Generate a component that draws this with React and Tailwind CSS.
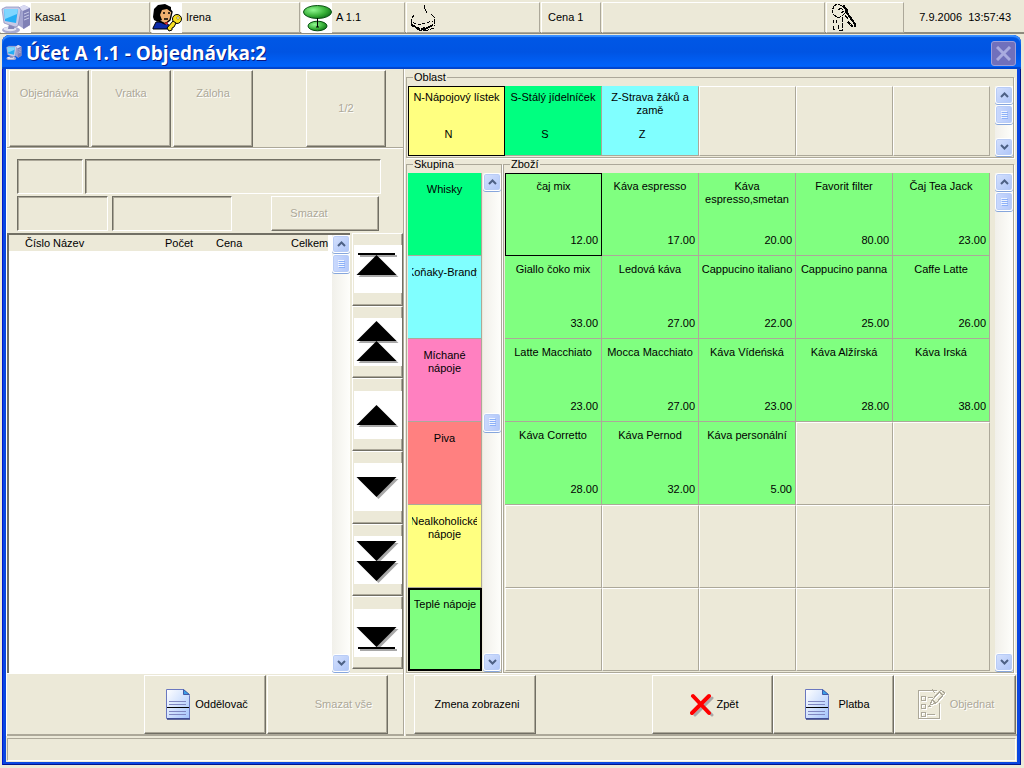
import React, { useState } from 'react'
import clsx from 'clsx'

const AREAS = [
  { name: 'N-Nápojový lístek', code: 'N', color: 'bg-[#ffff80]' },
  { name: 'S-Stálý jídelníček', code: 'S', color: 'bg-[#00ff80]' },
  { name: 'Z-Strava žáků a zamě', code: 'Z', color: 'bg-[#80ffff]' },
  null,
  null,
  null,
]

const GROUPS = [
  { lines: ['Whisky'], color: 'bg-[#00ff80]' },
  { lines: ['Koňaky-Brandy'], color: 'bg-[#80ffff]' },
  { lines: ['Míchané', 'nápoje'], color: 'bg-[#ff80c0]' },
  { lines: ['Piva'], color: 'bg-[#ff8080]' },
  { lines: ['Nealkoholické', 'nápoje'], color: 'bg-[#ffff80]' },
  { lines: ['Teplé nápoje'], color: 'bg-[#80ff80]' },
]

const GOODS = [
  ['čaj mix', '12.00'],
  ['Káva espresso', '17.00'],
  ['Káva espresso,smetan', '20.00'],
  ['Favorit filter', '80.00'],
  ['Čaj Tea Jack', '23.00'],
  ['Giallo čoko mix', '33.00'],
  ['Ledová káva', '27.00'],
  ['Cappucino italiano', '22.00'],
  ['Cappucino panna', '25.00'],
  ['Caffe Latte', '26.00'],
  ['Latte Macchiato', '23.00'],
  ['Mocca Macchiato', '27.00'],
  ['Káva Vídeńská', '23.00'],
  ['Káva Alžírská', '28.00'],
  ['Káva Irská', '38.00'],
  ['Káva Corretto', '28.00'],
  ['Káva Pernod', '32.00'],
  ['Káva personální', '5.00'],
]

const GOODS_SLOTS = 30

// shapes inside a 48x48 button face
const ARROWS = [
  { label: 'Na začátek', d: 'M4 8H41V10H4ZM22.5 10L42.5 30H2.5Z' },
  { label: 'O stránku nahoru', d: 'M22.5 3L42.5 23H2.5ZM22.5 23L42.5 43H2.5Z' },
  { label: 'Nahoru', d: 'M22.5 14L42.5 34H2.5Z' },
  { label: 'Dolů', d: 'M2.5 14H42.5L22.5 34Z' },
  { label: 'O stránku dolů', d: 'M2.5 5H42.5L22.5 25ZM2.5 25H42.5L22.5 45Z' },
  { label: 'Na konec', d: 'M2.5 18H42.5L22.5 38ZM4 38H41V40H4Z' },
]

const RAISED =
  'border border-t-white border-l-white border-r-[#716f64] border-b-[#716f64] shadow-[inset_-1px_-1px_0_#aca899]'
const SUNKEN =
  'border border-t-[#716f64] border-l-[#716f64] border-r-white border-b-white shadow-[inset_1px_1px_0_#aca899]'
const DISABLED = 'text-[#aca899] [text-shadow:1px_1px_0_#fff]'

/* ---------- icons ---------- */

function ComputerIcon({ className }) {
  return (
    <svg viewBox="0 0 30 30" className={className}>
      <path d="M17 5L23 2L29 5V22L23 26L17 22Z" fill="#a3a5d0" />
      <path d="M17 5L23 2L29 5L22 8Z" fill="#d9daf2" />
      <path d="M22 8L29 5V22L22 26Z" fill="#7f81b6" />
      <path d="M23 11L28 9M23 14L28 12M23 17L28 15" stroke="#c9cbe8" />
      <ellipse cx="10" cy="27" rx="9" ry="3.5" fill="#a9abd0" />
      <ellipse cx="9" cy="26" rx="6.5" ry="2.2" fill="#e4e5f4" />
      <path d="M8 21H15L13 26H7Z" fill="#8587b8" />
      <path d="M1 6L5 4L18 4L20 7L17 23L14 24L3 20Z" fill="#c8cae6" stroke="#8587b8" strokeWidth=".7" />
      <path d="M3 6L17 6L15 20L4 18Z" fill="#25aef5" />
      <path d="M3 6L17 6L16 11L4 16Z" fill="#7fd6ff" />
    </svg>
  )
}

function UserKeyIcon() {
  return (
    <svg viewBox="0 0 30 30" className="h-[30px] w-[30px] bg-white">
      <path d="M1 25L4 19H13L18 23L16 26H1Z" fill="#0c2ba8" stroke="#000" />
      <path d="M7 5L17 4L19 10L17 18L12 20L7 16Z" fill="#f0b070" />
      <path d="M1 14L2 6L6 2L13 1L19 4V9L15 6L10 7L8 12L10 17L6 19L2 17Z" fill="#000" />
      <path d="M11 10H13M16 10H18M12 16H16M17 5L20 9L18 17L13 21L7 18" fill="none" stroke="#000" strokeWidth="1.4" />
      <path d="M12 20L16 19L15 22Z" fill="#e02020" />
      <circle cx="25" cy="16" r="4.5" fill="#f8e020" stroke="#000" />
      <path d="M21 18L15 25L17 28L20 27V25L22 24L24 20Z" fill="#f8e020" stroke="#000" />
      <circle cx="26" cy="15" r="1.3" fill="#fff" stroke="#7a6500" strokeWidth=".6" />
    </svg>
  )
}

function TableIcon() {
  return (
    <svg viewBox="0 0 30 30" className="h-[30px] w-[30px] bg-white">
      <defs>
        <radialGradient id="leaf" cx=".35" cy=".35" r=".75">
          <stop offset="0" stopColor="#90f890" />
          <stop offset=".6" stopColor="#38b038" />
          <stop offset="1" stopColor="#0c6a18" />
        </radialGradient>
      </defs>
      <ellipse cx="15.5" cy="9" rx="14" ry="6.5" fill="url(#leaf)" stroke="#075010" />
      <ellipse cx="15.5" cy="23" rx="9.5" ry="4.8" fill="url(#leaf)" stroke="#075010" />
      <path d="M15.5 15V24" stroke="#000" />
      <path d="M14 24H17" stroke="#000" />
    </svg>
  )
}

function PrinterIcon() {
  return (
    <svg viewBox="0 0 30 30" className="h-[30px] w-[30px]" fill="none" stroke="#000" shapeRendering="crispEdges">
      <path d="M15 2V5L17 8L18 10" strokeDasharray="4 1" />
      <path d="M5 12L3 15L2 19L10 22L16 20L24 18" strokeDasharray="3 2" />
      <path d="M22 11L25 14V23" strokeDasharray="5 1" />
      <path d="M2 19V22L10 27L16 28L25 25" strokeDasharray="7 1" />
      <path d="M3 22L11 26L17 25" strokeWidth="2" strokeDasharray="4 1" />
      <path d="M14 27L20 24L24 22" strokeWidth="2" />
    </svg>
  )
}

function KeysIcon() {
  return (
    <svg viewBox="0 0 30 30" className="h-[30px] w-[30px]" fill="none" stroke="#000" shapeRendering="crispEdges">
      <path d="M3 3L6 1L9 2L13 2L15 6L14 10L11 13L7 15L3 12L1 8Z" strokeDasharray="4 1" />
      <path d="M7 7L10 5L13 8L10 10" strokeDasharray="3 1" />
      <path d="M12 3L16 7V10L24 21V24" strokeWidth="2" />
      <path d="M14 12L17 16" />
      <path d="M17 19L23 25" strokeWidth="2" strokeDasharray="3 1" />
      <path d="M11 14V27H8M2 17V20M5 17V20M2 23V26H5M7 22V26" strokeDasharray="5 1" />
    </svg>
  )
}

function DocumentIcon() {
  return (
    <svg viewBox="0 0 25 31" className="h-[31px] w-[25px] shrink-0">
      <defs>
        <linearGradient id="paper" x1="0" y1="0" x2="1" y2="1">
          <stop offset="0" stopColor="#fff" />
          <stop offset="1" stopColor="#a4c4fc" />
        </linearGradient>
      </defs>
      <path d="M.5 .5H17.5L23.5 6.5V29.5H.5Z" fill="url(#paper)" stroke="#6a78c0" />
      <path d="M1 30H24" stroke="#333f86" strokeWidth="1.5" />
      <path d="M17.5 .5V5.5H23.5Z" fill="#3aa0e8" stroke="#405aa8" />
      <path d="M3 12.5H20M3 15.5H20M3 22.5H20M3 25.5H20" stroke="#8087c0" />
      <path d="M1 18.5H23" stroke="#000" />
    </svg>
  )
}

function CrossIcon() {
  return (
    <svg viewBox="0 0 24 24" className="h-6 w-6 shrink-0" fill="none" strokeLinecap="round">
      <path d="M5 5L22 22M22 5L5 22" stroke="#a9a9a9" strokeWidth="3" />
      <path d="M3 3L19 20M19 3L2 20" stroke="#f00" strokeWidth="4" />
    </svg>
  )
}

function OrderIcon() {
  const d =
    'M19 1.5H.5V29.5H21.5V14M3 7.5H7V11.5H3ZM3 15.5H7V19.5H3ZM3 23.5H7V27.5H3ZM10 8.5H15M10 17.5H13M9 25.5H17M14 .5L17 4M12 16L14 11L23 1L27 4L18 14ZM14 11L18 14M21 3L25 6'
  return (
    <svg viewBox="0 0 28 31" className="h-[31px] w-7 shrink-0" fill="none" shapeRendering="crispEdges">
      <path d={d} stroke="#fff" transform="translate(1 1)" />
      <path d={d} stroke="#aca899" />
    </svg>
  )
}

/* ---------- small controls ---------- */

function ScrollButton({ label, d }) {
  return (
    <button
      aria-label={label}
      className="flex h-[18px] shrink-0 items-center justify-center rounded-[3px] border border-white bg-linear-to-br from-[#d5e1fd] to-[#aec5f8] shadow-[inset_0_0_0_1px_#b8ccf6,0_1px_0_#86a6dc]"
    >
      <svg viewBox="0 0 9 6" className="h-[6px] w-[9px]" fill="none" stroke="#4d6185" strokeWidth="2">
        <path d={d} />
      </svg>
    </button>
  )
}

function ScrollBar({ middle }) {
  return (
    <div className="flex w-[18px] shrink-0 flex-col bg-linear-to-r from-[#f1f0ea] to-[#fefefb]">
      <ScrollButton label="Nahoru" d="M1 5L4.5 1.5L8 5" />
      <div className={middle ? 'flex-1' : 'h-px'} />
      <div className="flex h-[19px] shrink-0 items-center justify-center rounded-[3px] border border-white bg-linear-to-r from-[#cbdafd] to-[#b3c8fa] shadow-[inset_0_0_0_1px_#b8ccf6,0_1px_0_#86a6dc]">
        <svg viewBox="0 0 7 8" className="h-2 w-[7px]">
          <path d="M0 .5H6M0 2.5H6M0 4.5H6M0 6.5H6" stroke="#eef4fe" />
          <path d="M1 1.5H7M1 3.5H7M1 5.5H7M1 7.5H7" stroke="#8cb0f8" />
        </svg>
      </div>
      <div className="flex-1" />
      <ScrollButton label="Dolů" d="M1 1L4.5 4.5L8 1" />
    </div>
  )
}

function Panel({ className, children }) {
  return (
    <div
      className={clsx(
        'flex h-[31px] items-center border border-t-white border-l-white border-r-[#aca899] border-b-[#aca899]',
        className
      )}
    >
      {children}
    </div>
  )
}

function GroupBox({ title, className, children }) {
  return (
    <fieldset
      className={clsx(
        'min-w-0 border border-[#aca899] pt-[3px] pb-px pl-px shadow-[1px_1px_0_#fff]',
        className
      )}
    >
      <legend className="ml-[5px] px-px leading-[12px]">{title}</legend>
      {children}
    </fieldset>
  )
}

function EmptyCell() {
  return <div className="border border-t-white border-l-white border-r-[#aca899] border-b-[#aca899]" />
}

function BigButton({ className, disabled, children }) {
  return (
    <button
      disabled={disabled}
      className={clsx('flex h-[59px] items-center justify-center', RAISED, disabled && DISABLED, className)}
    >
      {children}
    </button>
  )
}

/* ---------- sections ---------- */

function StatusBar() {
  return (
    <header className="flex h-[34px] shrink-0 items-start gap-px border-b-2 border-[#8e8b7e] pt-[2px]">
      <Panel className="w-[150px]">
        <ComputerIcon className="h-[30px] w-[30px] bg-white" />
        <span className="ml-1">Kasa1</span>
      </Panel>
      <Panel className="w-[149px]">
        <UserKeyIcon />
        <span className="ml-1">Irena</span>
      </Panel>
      <Panel className="w-[104px]">
        <TableIcon />
        <span className="ml-1">A 1.1</span>
      </Panel>
      <Panel className="w-[134px] pl-[2px]">
        <PrinterIcon />
      </Panel>
      <Panel className="w-[60px] pl-[6px]">Cena 1</Panel>
      <Panel className="flex-1" />
      <Panel className="w-[78px] pl-1">
        <KeysIcon />
      </Panel>
      <div className="flex h-[31px] w-[119px] items-center justify-end pr-[13px] whitespace-pre">7.9.2006  13:57:43</div>
    </header>
  )
}

function OrderPane() {
  return (
    <section className="flex w-[398px] shrink-0 flex-col border-r border-l border-r-[#aca899] border-l-white">
      <div className="flex h-[79px] gap-[2px] border-b border-[#aca899] pt-px pr-[17px] pl-[2px] shadow-[0_1px_0_#fff]">
        {['Objednávka', 'Vratka', 'Záloha'].map((t) => (
          <button key={t} disabled className={clsx('flex h-[77px] w-[80px] justify-center pt-4', RAISED, DISABLED)}>
            {t}
          </button>
        ))}
        <button disabled className={clsx('ml-auto h-[77px] w-[80px]', RAISED, DISABLED)}>
          1/2
        </button>
      </div>

      <div className="flex flex-col gap-[2px] pt-[11px] pr-[22px] pb-[2px] pl-[10px]">
        <div className="flex gap-[2px]">
          <input aria-label="Číslo" readOnly className={clsx('h-[35px] w-[66px]', SUNKEN)} />
          <input aria-label="Název" readOnly className={clsx('h-[35px] min-w-0 flex-1', SUNKEN)} />
        </div>
        <div className="flex gap-1 pr-[2px]">
          <input aria-label="Počet" readOnly className={clsx('h-[35px] w-[91px]', SUNKEN)} />
          <input aria-label="Cena" readOnly className={clsx('h-[35px] w-[120px]', SUNKEN)} />
          <button disabled className={clsx('ml-auto h-[35px] w-[108px] pr-8', RAISED, DISABLED)}>
            Smazat
          </button>
        </div>
      </div>

      <div className="flex flex-1">
        <div className="flex flex-1 border-t-2 border-l-2 border-[#716f64] bg-white pb-px">
          <div className="flex-1 pr-1">
            <table className="w-full table-fixed bg-[#ece9d8]">
              <thead>
                <tr className="h-4 text-left leading-4">
                  <th className="w-[43px] pl-4 font-normal">Číslo</th>
                  <th className="w-[113px] pl-px font-normal">Název</th>
                  <th className="w-[51px] font-normal">Počet</th>
                  <th className="w-[75px] font-normal">Cena</th>
                  <th className="font-normal">Celkem</th>
                </tr>
              </thead>
              <tbody />
            </table>
          </div>
          <ScrollBar />
        </div>
        <div className="ml-[2px] flex w-[51px] flex-col pb-1">
          {ARROWS.map((a) => (
            <button
              key={a.label}
              aria-label={a.label}
              className={clsx('flex flex-1 items-center justify-end', RAISED)}
            >
              <svg viewBox="0 0 48 48" className="h-12 w-12 bg-white">
                <path d={a.d} fill="#a8a8a8" transform="translate(2 2)" />
                <path d={a.d} fill="#000" />
              </svg>
            </button>
          ))}
        </div>
      </div>

      <div className="flex h-[63px] justify-end gap-px border-t border-b-2 border-t-white border-b-[#aca899] pt-px pr-[15px]">
        <BigButton className="w-[122px] gap-1 pl-1">
          <DocumentIcon />
          Oddělovač
        </BigButton>
        <BigButton disabled className="w-[121px] pl-8">
          Smazat vše
        </BigButton>
      </div>
    </section>
  )
}

function CatalogPane() {
  const [area, setArea] = useState(0)
  const [group, setGroup] = useState(5)
  const [item, setItem] = useState(0)

  return (
    <section className="flex min-w-0 flex-1 flex-col border-l border-white pl-px">
      <div className="flex flex-1 flex-col pt-[2px] pr-[3px]">
        <GroupBox title="Oblast" className="flex h-[87px] gap-[5px]">
          <div className="grid h-[70px] flex-1 grid-cols-6">
            {AREAS.map((a, i) =>
              a ? (
                <button
                  key={a.code}
                  onClick={() => setArea(i)}
                  className={clsx(
                    'flex flex-col items-center pt-1 leading-[13px]',
                    a.color,
                    area === i ? 'border border-black' : 'border-t border-r border-b border-t-transparent border-r-[#aca899] border-b-[#aca899]'
                  )}
                >
                  <span className="h-[37px] w-[94px]">{a.name}</span>
                  <span className="pr-4">{a.code}</span>
                </button>
              ) : (
                <EmptyCell key={i} />
              )
            )}
          </div>
          <ScrollBar />
        </GroupBox>

        <div className="flex flex-1 gap-px">
          <GroupBox title="Skupina" className="flex w-[96px] gap-px">
            <div className="grid flex-1 grid-rows-6">
              {GROUPS.map((g, i) => (
                <button
                  key={g.lines[0]}
                  onClick={() => setGroup(i)}
                  className={clsx(
                    'flex min-w-0 flex-col px-1 leading-[13px]',
                    g.color,
                    group === i ? 'border-2 border-black pt-2' : 'border-r border-b border-[#aca899] pt-[10px]'
                  )}
                >
                  {g.lines.map((l) => (
                    <span key={l} className="flex w-full justify-center overflow-hidden whitespace-nowrap">
                      {l}
                    </span>
                  ))}
                </button>
              ))}
            </div>
            <ScrollBar middle />
          </GroupBox>

          <GroupBox title="Zboží" className="flex flex-1 gap-[5px]">
            <div className="grid flex-1 grid-cols-5 grid-rows-6">
              {Array.from({ length: GOODS_SLOTS }, (_, i) => {
                const g = GOODS[i]
                if (!g) return <EmptyCell key={i} />
                return (
                  <button
                    key={i}
                    onClick={() => setItem(i)}
                    className={clsx(
                      'flex flex-col justify-between bg-[#80ff80] pb-2 leading-[13px]',
                      item === i ? 'border border-black pt-[6px]' : 'border-r border-b border-[#aca899] pt-[7px]'
                    )}
                  >
                    <span className="w-full text-center">{g[0]}</span>
                    <span className="w-full pr-[3px] text-right">{g[1]}</span>
                  </button>
                )
              })}
            </div>
            <ScrollBar />
          </GroupBox>
        </div>
      </div>

      <div className="flex h-[63px] border-t border-b-2 border-t-white border-b-[#aca899] pt-px pr-px pl-2">
        <BigButton className="w-[122px] pl-1">Zmena zobrazeni</BigButton>
        <BigButton className="ml-auto w-[121px] gap-[2px] pl-1">
          <CrossIcon />
          Zpět
        </BigButton>
        <BigButton className="w-[121px] gap-2 pl-2">
          <DocumentIcon />
          Platba
        </BigButton>
        <BigButton disabled className="w-[122px] gap-1 pl-[2px]">
          <OrderIcon />
          Objednat
        </BigButton>
      </div>
    </section>
  )
}

export default function App() {
  return (
    <div className="flex min-h-screen flex-col bg-[#ece9d8] font-['Liberation_Sans',Arial,sans-serif] text-[11px] leading-[13px] text-black">
      <StatusBar />

      <main className="mt-px mr-[3px] mb-[3px] ml-[2px] flex flex-1 flex-col rounded-t-lg bg-[#0a46e0] px-1 pb-[3px] shadow-[inset_1px_0_0_#0019cf,inset_-1px_-1px_0_#00138c]">
        {/* Title bar */}
        <div className="-mx-1 flex h-[34px] shrink-0 items-center rounded-t-lg bg-linear-to-b from-[#0058e6] via-[#0054e3] to-[#0066ff] pr-[5px] pl-1 shadow-[inset_0_2px_1px_#3a90ff,inset_0_-2px_1px_#0044cc]">
          <ComputerIcon className="h-4 w-4" />
          <h1 className="mt-[2px] ml-1 flex-1 font-['Open_Sans',sans-serif] text-[19px] leading-6 font-bold text-white [text-shadow:1px_1px_0_#0a1883]">
            Účet A 1.1 - Objednávka:2
          </h1>
          <button
            aria-label="Zavřít"
            disabled
            className="mt-[2px] flex h-[25px] w-[25px] items-center justify-center rounded-[3px] border border-[#9c9ed8] bg-[#7070bc]"
          >
            <svg viewBox="0 0 15 15" className="h-[15px] w-[15px]" stroke="#a9abdf" strokeWidth="3">
              <path d="M1 1L14 14M14 1L1 14" />
            </svg>
          </button>
        </div>

        <div className="flex flex-1 flex-col bg-[#ece9d8]">
          <div className="flex flex-1">
            <OrderPane />
            <CatalogPane />
          </div>
          <div className="mx-px mt-[2px] mb-px h-[23px] shrink-0 border border-t-[#aca899] border-l-[#aca899] border-r-white border-b-white" />
        </div>
      </main>
    </div>
  )
}
